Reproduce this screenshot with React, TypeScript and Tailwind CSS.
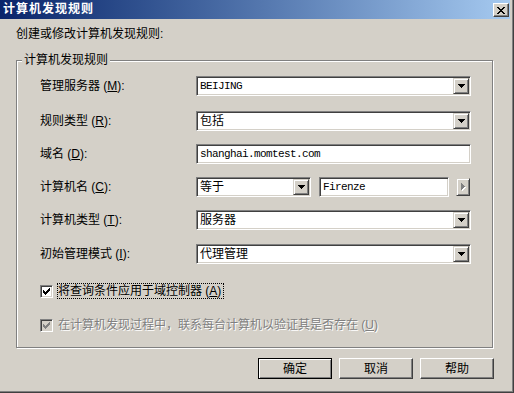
import React from "react";

const sunken =
  "border border-t-[#808080] border-l-[#808080] border-b-white border-r-white shadow-[inset_1px_1px_0_#404040,inset_-1px_-1px_0_#D4D0C8]";
const raised =
  "border border-t-[#D4D0C8] border-l-[#D4D0C8] border-b-[#404040] border-r-[#404040] shadow-[inset_1px_1px_0_#fff,inset_-1px_-1px_0_#808080]";
const btnRaised =
  "border border-t-white border-l-white border-b-[#404040] border-r-[#404040] shadow-[inset_-1px_-1px_0_#808080]";

function CheckMark({ color }: { color: string }) {
  return (
    <svg width="7" height="7" viewBox="0 0 7 7" shapeRendering="crispEdges">
      <path
        fill={color}
        d="M6 0h1v1h-1z M5 1h2v1h-2z M0 2h1v1h-1z M4 2h3v1h-3z M0 3h2v1h-2z M3 3h3v1h-3z M0 4h5v1h-5z M1 5h3v1h-3z M2 6h1v1h-1z"
      />
    </svg>
  );
}

function CloseX() {
  return (
    <svg width="8" height="7" viewBox="0 0 8 7" shapeRendering="crispEdges">
      <path
        fill="#000"
        d="M0 0h2v1h-2z M6 0h2v1h-2z M1 1h2v1h-2z M5 1h2v1h-2z M2 2h4v1h-4z M3 3h2v1h-2z M2 4h4v1h-4z M1 5h2v1h-2z M5 5h2v1h-2z M0 6h2v1h-2z M6 6h2v1h-2z"
      />
    </svg>
  );
}

function DownArrow() {
  return (
    <svg width="7" height="4" viewBox="0 0 7 4" shapeRendering="crispEdges">
      <path fill="#000" d="M0 0h7v1h-7z M1 1h5v1h-5z M2 2h3v1h-3z M3 3h1v1h-1z" />
    </svg>
  );
}

function RightArrowDisabled() {
  const d = "M0 0h1v1h-1z M0 1h2v1h-2z M0 2h3v1h-3z M0 3h4v1h-4z M0 4h3v1h-3z M0 5h2v1h-2z M0 6h1v1h-1z";
  return (
    <svg width="5" height="8" viewBox="0 0 5 8" shapeRendering="crispEdges">
      <path fill="#fff" transform="translate(1 1)" d={d} />
      <path fill="#808080" d={d} />
    </svg>
  );
}

function Combo({ value, mono, width }: { value: string; mono?: boolean; width: string }) {
  return (
    <div className={`${sunken} ${width} h-[20px] p-[1px] flex items-center bg-white`}>
      <span
        className={`flex-1 pl-[2px] whitespace-nowrap ${
          mono ? "font-['Liberation_Mono',monospace] text-[11px] tracking-[-0.6px]" : "text-[12px]"
        }`}
      >
        {value}
      </span>
      <div className={`${raised} w-[16px] h-[16px] bg-[#D4D0C8] flex items-center justify-center`}>
        <DownArrow />
      </div>
    </div>
  );
}

function TextBox({ value, width }: { value: string; width: string }) {
  return (
    <div className={`${sunken} ${width} h-[20px] p-[1px] flex items-center bg-white`}>
      <span className="pl-[2px] whitespace-nowrap font-['Liberation_Mono',monospace] text-[11px] tracking-[-0.6px]">
        {value}
      </span>
    </div>
  );
}

function Label({ text, k }: { text: string; k: string }) {
  return (
    <div className="w-[156px] text-[12px] leading-[12px] whitespace-nowrap">
      {text} (<span className="underline underline-offset-[1px]">{k}</span>):
    </div>
  );
}

export default function App() {
  return (
    <div className="w-[514px] h-[393px] bg-[#D4D0C8] border-r border-b border-[#404040] overflow-hidden font-['Liberation_Sans','Noto_Sans_CJK_SC',sans-serif] text-black">
      <div className="h-full border-r border-b border-[#808080] pr-[2px] pb-[2px] flex flex-col">
        {/* Title bar */}
        <div className="h-[19px] flex items-start justify-between pl-[3px] pr-[1px] bg-linear-to-r from-[#0A246A] to-[#A6CAF0]">
          <span className="leading-[19px] text-[12px] font-bold tracking-[1px] text-white whitespace-nowrap">
            计算机发现规则
          </span>
          <div className={`${btnRaised} mt-[3px] w-[16px] h-[14px] bg-[#D4D0C8] flex items-center justify-center`}>
            <CloseX />
          </div>
        </div>

        {/* Body */}
        <div className="flex flex-col pl-[16px]">
          <div className="mt-[9px] text-[12px] leading-[12px] whitespace-nowrap">创建或修改计算机发现规则:</div>

          <div className="relative mt-[20px] w-[477px] h-[288px] border border-[#808080] shadow-[inset_1px_1px_0_#fff,1px_1px_0_#fff] pl-[23px] pt-[15px] flex flex-col">
            <span className="absolute left-[5px] top-[-7px] px-[2px] bg-[#D4D0C8] text-[12px] leading-[12px] whitespace-nowrap">
              计算机发现规则
            </span>

            <div className="flex items-center h-[20px]">
              <Label text="管理服务器" k="M" />
              <Combo value="BEIJING" mono width="w-[275px]" />
            </div>
            <div className="flex items-center h-[20px] mt-[15px]">
              <Label text="规则类型" k="R" />
              <Combo value="包括" width="w-[275px]" />
            </div>
            <div className="flex items-center h-[20px] mt-[13px]">
              <Label text="域名" k="D" />
              <TextBox value="shanghai.momtest.com" width="w-[275px]" />
            </div>
            <div className="flex items-center h-[20px] mt-[13px]">
              <Label text="计算机名" k="C" />
              <Combo value="等于" width="w-[115px]" />
              <div className="ml-[8px]">
                <TextBox value="Firenze" width="w-[130px]" />
              </div>
              <div className={`${raised} ml-[7px] w-[14px] h-[18px] bg-[#D4D0C8] flex items-center justify-center`}>
                <RightArrowDisabled />
              </div>
            </div>
            <div className="flex items-center h-[20px] mt-[13px]">
              <Label text="计算机类型" k="T" />
              <Combo value="服务器" width="w-[275px]" />
            </div>
            <div className="flex items-center h-[20px] mt-[14px]">
              <Label text="初始管理模式" k="I" />
              <Combo value="代理管理" width="w-[275px]" />
            </div>

            {/* Checkbox 1 */}
            <div className="flex items-center h-[16px] mt-[19px]">
              <div className={`${sunken} w-[13px] h-[13px] bg-white flex items-center justify-center`}>
                <CheckMark color="#000" />
              </div>
              <div className="ml-[4px] h-[16px] border border-dotted border-black pl-[0px] pr-[2px] flex items-center text-[12px] leading-[12px] whitespace-nowrap">
                将查询条件应用于域控制器 (<span className="underline underline-offset-[1px]">A</span>)
              </div>
            </div>

            {/* Checkbox 2 (disabled) */}
            <div className="flex items-center h-[16px] mt-[18px]">
              <div className={`${sunken} w-[13px] h-[13px] bg-[#D4D0C8] flex items-center justify-center`}>
                <CheckMark color="#808080" />
              </div>
              <div className="ml-[5px] text-[12px] leading-[12px] whitespace-nowrap text-[#808080] [text-shadow:1px_1px_0_#fff]">
                在计算机发现过程中，联系每台计算机以验证其是否存在 (<span className="underline underline-offset-[1px]">U</span>)
              </div>
            </div>
          </div>

          {/* Buttons */}
          <div className="mt-[10px] w-[478px] flex justify-end gap-[7px]">
            <div className="w-[74px] h-[21px] border border-black">
              <div className="w-full h-full bg-[#D4D0C8] shadow-[inset_1px_1px_0_#fff,inset_-1px_-1px_0_#808080] flex items-center justify-center text-[12px] leading-[12px]">
                确定
              </div>
            </div>
            <div className={`${btnRaised} w-[74px] h-[21px] bg-[#D4D0C8] flex items-center justify-center text-[12px] leading-[12px]`}>
              取消
            </div>
            <div className={`${btnRaised} w-[74px] h-[21px] bg-[#D4D0C8] flex items-center justify-center text-[12px] leading-[12px]`}>
              帮助
            </div>
          </div>
        </div>
      </div>
    </div>
  );
}
